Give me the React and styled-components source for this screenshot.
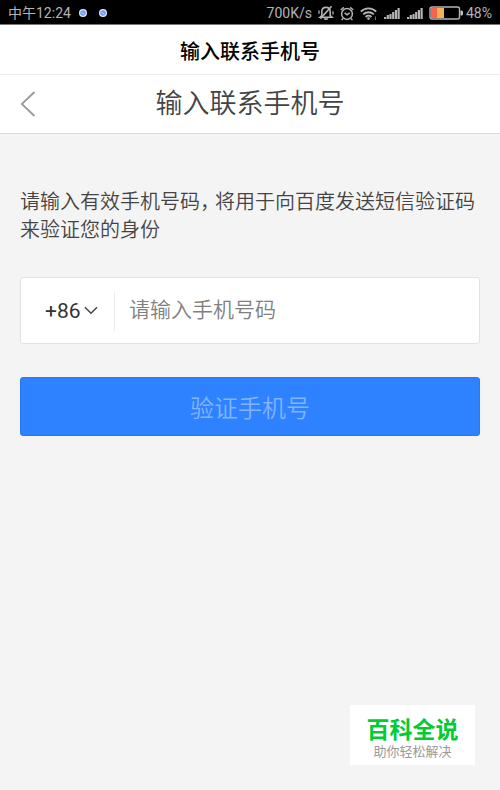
import React, { useState } from "react";
import styled, { createGlobalStyle } from "styled-components";

const signalBars = [2, 4, 5, 7, 9, 11];

function Signal() {
  return (
    <svg width="17" height="12" viewBox="0 0 17 12" fill="#b4b4b4">
      {signalBars.map((h, i) => (
        <rect key={i} x={1 + i * 2.7} y={12 - h} width="2.2" height={h} />
      ))}
    </svg>
  );
}

function MutedBell() {
  return (
    <svg
      width="16"
      height="16"
      viewBox="0 0 16 16"
      fill="none"
      stroke="#b4b4b4"
      strokeWidth="1.6"
    >
      <path d="M3.8 10.6V6.8C3.8 4.2 5.6 2.4 8 2.4s4.2 1.8 4.2 4.4v3.8l1.8 1.6H2z" />
      <path d="M6.4 13.2c.4 1.4 2.8 1.4 3.2 0" />
      <path d="M13.6 1.2L2.4 13.6" />
      <path d="M1 5.4v3.4M15 6.2v3.2" strokeWidth="1.3" />
    </svg>
  );
}

function Alarm() {
  return (
    <svg
      width="14"
      height="15"
      viewBox="0 0 14 15"
      fill="none"
      stroke="#b4b4b4"
      strokeWidth="1.5"
    >
      <circle cx="7" cy="8" r="5.4" />
      <path d="M4.6 6.8L7 8.8l2.6-2M.8 4L3.8 1.4M13.2 4l-3-2.6M3 12.4l-1.4 1.6M11 12.4l1.4 1.6" />
    </svg>
  );
}

function Wifi() {
  return (
    <svg
      width="17"
      height="13"
      viewBox="0 0 17 13"
      fill="none"
      stroke="#b4b4b4"
      strokeWidth="1.9"
    >
      <path d="M.8 4.6c4.2-4.3 11.2-4.3 15.4 0M3.2 7.4c2.9-2.9 7.7-2.9 10.6 0M5.6 10c1.6-1.6 4.2-1.6 5.8 0" />
      <circle cx="8.5" cy="11.6" r="1.3" fill="#b4b4b4" stroke="none" />
      <path d="M15.4 9.5V13" strokeWidth="1" stroke="#777" />
    </svg>
  );
}

function Battery() {
  return (
    <svg width="35" height="14" viewBox="0 0 35 14">
      <rect x="2" y="2" width="6" height="10" fill="#f4654c" />
      <rect x="8" y="2" width="7" height="10" fill="#f7b250" />
      <rect
        x="1"
        y="1"
        width="29.5"
        height="12"
        rx="2"
        fill="none"
        stroke="#b4b4b4"
        strokeWidth="1.4"
      />
      <path d="M31.5 4.5h1q1.5 0 1.5 1.5v2q0 1.5-1.5 1.5h-1z" fill="#c4c4c4" />
    </svg>
  );
}

function NoticeDot() {
  return (
    <svg width="8" height="8" viewBox="0 0 8 8">
      <circle cx="4" cy="4" r="4" fill="#dfeaff" />
      <circle cx="4" cy="4" r="2.8" fill="#6f9df5" />
      <path d="M2.4 3.2l3 2" stroke="#c9dbff" strokeWidth="0.9" />
    </svg>
  );
}

function App() {
  const [code, setCode] = useState("+86");
  const [phone, setPhone] = useState("");

  const handleSubmit = (e) => {
    e.preventDefault();
  };

  return (
    <>
      <GlobalStyle />
      <StatusBar>
        <StatusGroup $gap="12px">
          <Clock>中午12:24</Clock>
          <NoticeDot />
          <NoticeDot />
        </StatusGroup>
        <StatusGroup $gap="6px">
          <StatusText>700K/s</StatusText>
          <MutedBell />
          <Alarm />
          <Wifi />
          <Signal />
          <Signal />
          <BatteryLevel>
            <Battery />
            <StatusText>48%</StatusText>
          </BatteryLevel>
        </StatusGroup>
      </StatusBar>
      <NavTitle>输入联系手机号</NavTitle>
      <Header>
        <BackButton type="button" aria-label="返回">
          <svg
            width="16"
            height="26"
            viewBox="0 0 16 26"
            fill="none"
            stroke="#999"
            strokeWidth="1.8"
          >
            <path d="M14.5 1L1.8 13l12.7 12" />
          </svg>
        </BackButton>
        <h1>输入联系手机号</h1>
      </Header>
      <Form onSubmit={handleSubmit}>
        <Hint>
          请输入有效手机号码<Comma>，</Comma>将用于向百度发送短信验证码来验证您的身份
        </Hint>
        <Field>
          <CodePicker>
            <select
              aria-label="国家代码"
              value={code}
              onChange={(e) => setCode(e.target.value)}
            >
              <option>+86</option>
            </select>
            <svg
              width="14"
              height="9"
              viewBox="0 0 14 9"
              fill="none"
              stroke="#444"
              strokeWidth="1.5"
            >
              <path d="M1 1.2l6 6 6-6" />
            </svg>
          </CodePicker>
          <PhoneInput
            type="tel"
            aria-label="手机号码"
            placeholder="请输入手机号码"
            value={phone}
            onChange={(e) => setPhone(e.target.value)}
          />
        </Field>
        <SubmitButton type="submit">验证手机号</SubmitButton>
      </Form>
      <Badge>
        <strong>百科全说</strong>
        <span>助你轻松解决</span>
      </Badge>
    </>
  );
}

const GlobalStyle = createGlobalStyle`
  * {
    box-sizing: border-box;
  }

  body {
    margin: 0;
    background: #f4f4f4;
    color: #444;
    font-family: Roboto, "Noto Sans CJK SC", sans-serif;
    font-weight: 350;
  }

  button, input, select {
    margin: 0;
    padding: 0;
    border: none;
    outline: none;
    background: none;
    color: inherit;
    font: inherit;
  }

  svg {
    display: block;
    flex: none;
  }
`;

const StatusBar = styled.div`
  display: flex;
  justify-content: space-between;
  height: 25px;
  padding: 2px 8px 0;
  background: #000;
  border-bottom: 1px solid #777;
`;

const StatusGroup = styled.div`
  display: flex;
  align-items: center;
  gap: ${(props) => props.$gap};
`;

const StatusText = styled.span`
  color: #b4b4b4;
  font-size: 14px;
  font-weight: 400;
  line-height: 22px;
`;

const Clock = styled(StatusText)`
  margin-right: -4px;
`;

const BatteryLevel = styled.div`
  display: flex;
  align-items: center;
  gap: 2px;
`;

const NavTitle = styled.div`
  height: 50px;
  padding-top: 2px;
  background: #fff;
  border-bottom: 1px solid #ececec;
  color: #000;
  font-size: 20px;
  font-weight: 500;
  line-height: 50px;
  text-align: center;
`;

const Header = styled.header`
  display: grid;
  grid-template-columns: 40px 1fr 40px;
  align-items: center;
  height: 59px;
  padding: 0 20px;
  background: #fff;
  border-bottom: 1px solid #dcdcdc;

  h1 {
    margin: 0;
    font-size: 27px;
    font-weight: 350;
    line-height: 56px;
    text-align: center;
  }
`;

const BackButton = styled.button`
  width: 40px;
  cursor: pointer;
`;

const Form = styled.form`
  padding: 54px 20px 0;
`;

const Hint = styled.p`
  margin: 0;
  font-size: 20px;
  line-height: 28px;
`;

// half-width comma followed by a small gap
const Comma = styled.span`
  margin-right: 5px;
  font-feature-settings: "halt";
`;

const Field = styled.div`
  display: flex;
  align-items: center;
  height: 67px;
  margin-top: 33px;
  background: #fff;
  border: 1px solid #e2e2e2;
  border-radius: 3px;
`;

const CodePicker = styled.label`
  display: flex;
  align-items: center;
  gap: 3px;
  height: 40px;
  padding: 0 16px 0 24px;
  border-right: 1px solid #ececec;

  select {
    appearance: none;
    color: #333;
    font-size: 21px;
    font-weight: 400;
  }
`;

const PhoneInput = styled.input`
  flex: 1;
  min-width: 0;
  padding: 0 14px 2px;
  font-size: 21px;
  line-height: 32px;

  &::placeholder {
    color: #808080;
    opacity: 1;
  }
`;

const SubmitButton = styled.button`
  width: 100%;
  height: 59px;
  margin-top: 33px;
  background: #2e82ff;
  border: 1px solid #2678f5;
  border-radius: 3px;
  color: #82b4ff;
  font-size: 24px;
  cursor: pointer;
`;

const Badge = styled.div`
  position: fixed;
  right: 25px;
  bottom: 25px;
  display: flex;
  flex-direction: column;
  align-items: center;
  width: 125px;
  height: 60px;
  padding-top: 12px;
  background: #fff;

  strong {
    color: #00cc33;
    font-size: 23px;
    font-weight: 700;
    line-height: 28px;
  }

  span {
    color: #999;
    font-size: 13px;
    font-weight: 400;
    line-height: 14px;
  }
`;

export default App;
